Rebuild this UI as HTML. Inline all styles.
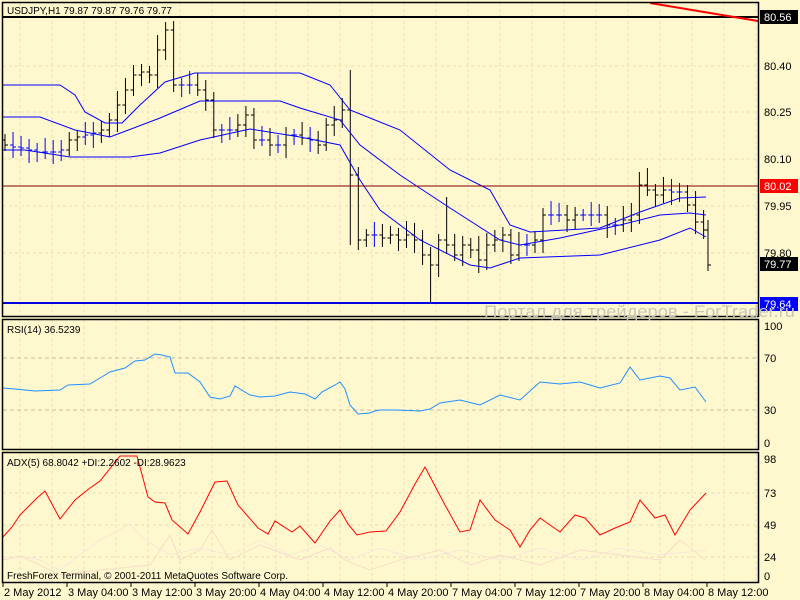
<!DOCTYPE html>
<html><head><meta charset="utf-8"><style>
html,body{margin:0;padding:0;background:#FFF8CF;}
svg{display:block;font-family:"Liberation Sans",sans-serif;}
</style></head><body>
<svg id="s" width="800" height="600" xmlns="http://www.w3.org/2000/svg">
<rect width="800" height="600" fill="#FFF8CF"/>
<g id="grid" stroke="#E8DFB0" stroke-dasharray="3,3" stroke-width="1"></g>
<g stroke="#E8DFB0" stroke-dasharray="3,3">
<line x1="3" y1="66" x2="757" y2="66"/><line x1="3" y1="112" x2="757" y2="112"/><line x1="3" y1="159" x2="757" y2="159"/><line x1="3" y1="206" x2="757" y2="206"/><line x1="3" y1="253" x2="757" y2="253"/>
<line x1="3" y1="493" x2="757" y2="493"/><line x1="3" y1="525" x2="757" y2="525"/><line x1="3" y1="557" x2="757" y2="557"/>
</g>
<g stroke="#C8C0A0" stroke-dasharray="4,3"><line x1="3" y1="358" x2="757" y2="358"/><line x1="3" y1="410" x2="757" y2="410"/></g>
<g id="bars" stroke="#000" stroke-width="1"></g>
<g fill="none" stroke="#0000FF" stroke-width="1">
<polyline points="3,85 60,85 75,95 85,112 105,123 122,123 140,105 165,82 195,73 300,73 330,85 350,110 400,130 450,170 490,190 510,225 530,232 600,228 640,212 680,198 706,197"/>
<polyline points="3,117 40,117 75,130 110,137 160,118 200,101 280,101 300,108 340,120 360,145 400,175 450,208 500,240 520,245 560,238 620,225 660,215 690,213 706,215"/>
<polyline points="3,150 25,150 70,157 130,157 160,153 200,140 250,129 300,137 340,145 360,180 380,210 420,240 470,265 490,268 520,258 600,255 660,240 690,228 706,237"/>
</g>
<line x1="3" y1="186" x2="758" y2="186" stroke="#800000" stroke-width="1"/>
<line x1="3" y1="303" x2="758" y2="303" stroke="#0000E0" stroke-width="2"/>
<line x1="3" y1="17" x2="758" y2="17" stroke="#000" stroke-width="2"/>
<line x1="650" y1="3" x2="758" y2="21" stroke="#FF0000" stroke-width="2"/>
<polyline fill="none" stroke="#1E90FF" stroke-width="1" points="3,388 15,389 35,391 60,390 68,385 90,384 100,378 110,372 125,368 135,361 145,360 155,354 162,355 170,357 175,373 188,373 200,382 210,397 220,399 230,396 235,386 250,395 260,397 275,396 290,392 305,394 315,399 322,392 335,385 340,382 345,389 350,405 358,414 370,413 375,411 380,410 395,410 420,411 430,409 440,403 460,400 480,405 500,395 520,400 540,382 560,384 580,382 600,388 620,383 630,367 640,380 660,376 670,378 680,390 695,387 706,402"/>
<polyline fill="none" stroke="#F5E8D8" stroke-width="1" points="3,560 20,556 40,560 60,570 80,555 100,540 130,524 145,540 170,555 200,548 230,555 260,540 290,555 320,545 350,560 380,548 420,560 460,550 500,560 540,548 580,560 620,548 660,555 706,550"/>
<polyline fill="none" stroke="#F8DCC8" stroke-width="1" points="3,560 20,556 40,565 60,575 100,570 150,565 170,535 180,560 200,550 212,530 230,560 260,545 300,560 330,548 345,560 370,570 400,560 440,550 470,565 500,555 540,565 580,550 620,555 660,560 680,540 706,560"/>
<polyline fill="none" stroke="#FF0000" stroke-width="1" points="3,537 12,527 20,515 30,505 37,498 45,491 60,519 75,500 90,488 100,481 120,456 137,456 148,497 155,502 165,503 172,520 188,534 200,512 215,482 227,481 238,505 258,528 268,534 275,521 292,532 300,526 315,543 330,521 340,510 348,524 357,535 370,532 386,531 400,512 415,484 425,467 445,505 460,532 470,530 480,500 495,520 510,530 520,547 530,530 540,518 550,525 560,532 575,515 585,518 600,535 615,528 630,522 640,500 655,518 665,515 675,535 690,510 706,493"/>
<g fill="none" stroke="#000" stroke-width="1.5">
<rect x="2.5" y="2.5" width="756" height="314"/>
<rect x="2.5" y="319.5" width="756" height="130"/>
<rect x="2.5" y="452.5" width="756" height="130"/>
</g>
<g font-size="10" fill="#000">
<text x="7" y="14">USDJPY,H1 79.87 79.87 79.76 79.77</text>
<text x="7" y="333">RSI(14) 36.5239</text>
<text x="7" y="466">ADX(5) 68.8042 +DI:2.2602 -DI:28.9623</text>
<text x="7" y="579">FreshForex Terminal, © 2001-2011 MetaQuotes Software Corp.</text>
</g>
<g font-size="11" fill="#000">
<text x="764" y="70">80.40</text><text x="764" y="116">80.25</text><text x="764" y="163">80.10</text><text x="764" y="210">79.95</text><text x="764" y="257">79.80</text>
<text x="764" y="330">100</text><text x="764" y="362">70</text><text x="764" y="414">30</text><text x="764" y="447">0</text>
<text x="764" y="463">98</text><text x="764" y="497">73</text><text x="764" y="529">49</text><text x="764" y="561">24</text><text x="764" y="580">0</text>
</g>
<rect x="760" y="10" width="38" height="14" fill="#000"/><text x="764" y="21" font-size="11" fill="#fff">80.56</text>
<rect x="760" y="179" width="38" height="14" fill="#FF0000"/><text x="764" y="190" font-size="11" fill="#fff">80.02</text>
<rect x="760" y="257" width="38" height="14" fill="#000"/><text x="764" y="268" font-size="11" fill="#fff">79.77</text>
<rect x="760" y="297" width="38" height="14" fill="#0000FF"/><text x="764" y="308" font-size="11" fill="#fff">79.64</text>
<text x="484" y="317" font-size="17" fill="#C8C6B8" textLength="311" lengthAdjust="spacingAndGlyphs">Портал для трейдеров - ForTrader.ru</text>
<g id="bt" font-size="11" fill="#000"></g>
</svg>
<script>
var NS="http://www.w3.org/2000/svg";
function el(p,t,a){var e=document.createElementNS(NS,t);for(var k in a)e.setAttribute(k,a[k]);p.appendChild(e);return e;}
var g=document.getElementById("grid");
for(var x=20;x<758;x+=32){el(g,"line",{x1:x,y1:3,x2:x,y2:316});el(g,"line",{x1:x,y1:320,x2:x,y2:449});el(g,"line",{x1:x,y1:453,x2:x,y2:582});}
var c=[145,147,148,150,152,152,152,150,140,137,135,133,130,120,105,90,75,72,75,50,30,85,85,85,90,100,130,130,130,125,115,140,140,145,145,135,135,138,140,145,125,120,110,175,240,235,235,238,235,240,235,240,255,265,240,245,255,245,250,260,245,240,235,255,245,245,240,215,215,215,220,215,215,215,215,225,225,220,215,185,190,195,190,192,192,205,222,230,265];
var sp={20:[22,0],19:[35,0],43:[70,245],53:[0,303],55:[197,0],79:[172,0],80:[168,0]};
var b=document.getElementById("bars");var prev=140;
for(var i=0;i<c.length;i++){var x=5+i*8.03;if(i==c.length-1)x=708;var o=prev,cl=c[i];
var h=Math.min(o,cl)-6-(i*7%9),l=Math.max(o,cl)+6+(i*5%8);
if(sp[i]){if(sp[i][0])h=sp[i][0];if(sp[i][1])l=sp[i][1];}
var col=Math.abs(o-cl)<3?"#0000FF":"#000";
el(b,"line",{x1:x,y1:h,x2:x,y2:l,stroke:col});
el(b,"line",{x1:x-3,y1:o,x2:x,y2:o,stroke:col});
el(b,"line",{x1:x,y1:cl,x2:x+3,y2:cl,stroke:col});prev=cl;}
var L=["2 May 2012","3 May 04:00","3 May 12:00","3 May 20:00","4 May 04:00","4 May 12:00","4 May 20:00","7 May 04:00","7 May 12:00","7 May 20:00","8 May 04:00","8 May 12:00"];
var bt=document.getElementById("bt");
for(var j=0;j<L.length;j++){var x=3+j*64;el(bt,"line",{x1:x,y1:583,x2:x,y2:587,stroke:"#000"});var t=el(bt,"text",{x:x+1,y:596});t.textContent=L[j];}
</script>
</body></html>
